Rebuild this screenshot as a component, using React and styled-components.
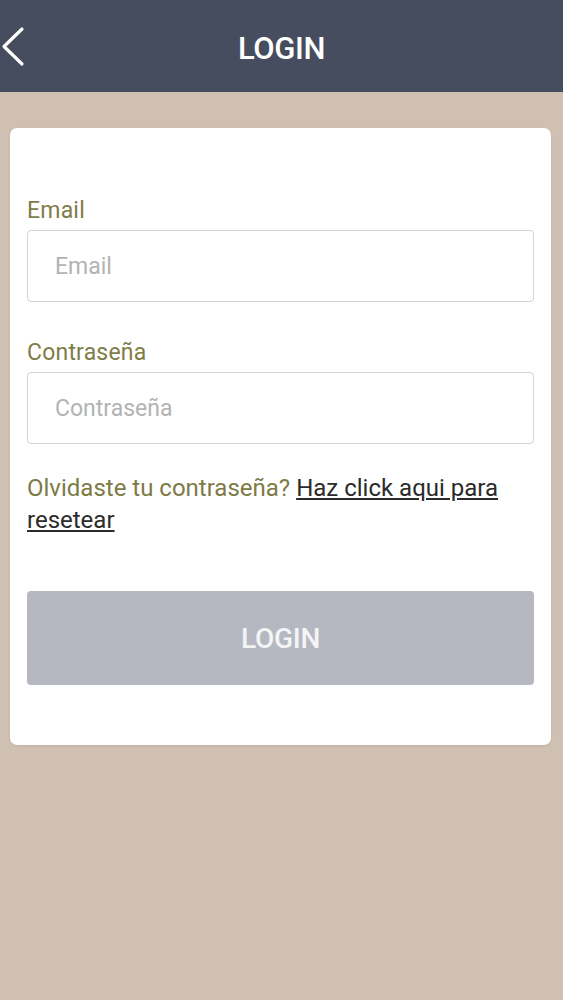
import React from 'react';
import styled, { createGlobalStyle } from 'styled-components';

const GlobalStyle = createGlobalStyle`
	html, body {
		margin: 0;
		padding: 0;
		background: #cfc0b1;
	}
	body {
		font-family: Roboto, 'Liberation Sans', sans-serif;
	}
`;

const Page = styled.div`
	min-height: 1000px;
	background: #cfc0b1;
`;

const HeaderBar = styled.nav`
	height: 92px;
	background: #464d5e;
	display: flex;
	align-items: center;
	justify-content: center;
	position: relative;
`;

const Back = styled.button`
	position: absolute;
	left: 0;
	top: 26px;
	width: 30px;
	height: 42px;
	padding: 0;
	border: none;
	background: none;
	cursor: pointer;

	svg {
		display: block;
	}
`;

const Title = styled.h1`
	margin: 4px 0 0 0;
	font-size: 31px;
	font-weight: 500;
	color: #ffffff;
	letter-spacing: -0.4px;
`;

const Content = styled.div`
	padding: 36px 12px 0 10px;
`;

const Card = styled.form`
	background: #ffffff;
	border-radius: 7px;
	padding: 69px 17px 60px 17px;
	box-shadow: 0 1px 3px rgba(0, 0, 0, 0.08);
`;

const Field = styled.div`
	display: flex;
	flex-direction: column;
	gap: 5px;
	margin-bottom: ${props => props.last ? '28px' : '37px'};
`;

const Label = styled.label`
	font-size: 23px;
	line-height: 28px;
	color: #807c47;
	letter-spacing: 0.2px;
`;

const Input = styled.input`
	box-sizing: border-box;
	height: 72px;
	width: 100%;
	border: 1px solid #d3d3d3;
	border-radius: 4px;
	padding: 0 27px;
	font-family: Roboto, 'Liberation Sans', sans-serif;
	font-size: 23px;
	color: #333;
	outline: none;

	&::placeholder {
		color: #b3b3b3;
	}
`;

const Forgot = styled.p`
	margin: 0 0 55px 0;
	font-size: 24px;
	line-height: 32px;
	color: #7d7a46;
`;

const ResetLink = styled.a`
	color: #2b2b2b;
	text-decoration: underline;
	cursor: pointer;
`;

const SubmitButton = styled.button`
	width: 100%;
	height: 94px;
	border: none;
	border-radius: 4px;
	background: #b5b8c1;
	color: #f4f4f6;
	font-family: Roboto, 'Liberation Sans', sans-serif;
	font-size: 28px;
	font-weight: 500;
	letter-spacing: -0.3px;
	cursor: pointer;
`;

export default function App() {
	return (
		<Page>
			<GlobalStyle />
			<HeaderBar>
				<Back aria-label="back">
					<svg width="30" height="42" viewBox="0 0 30 42">
						<polyline points="22,3 4,20.5 22,38" fill="none" stroke="#ffffff" strokeWidth="3.2" strokeLinecap="round" strokeLinejoin="round" />
					</svg>
				</Back>
				<Title>LOGIN</Title>
			</HeaderBar>
			<Content>
				<Card onSubmit={e => e.preventDefault()}>
					<Field>
						<Label htmlFor="email">Email</Label>
						<Input id="email" type="email" placeholder="Email" />
					</Field>
					<Field last>
						<Label htmlFor="password">Contraseña</Label>
						<Input id="password" type="password" placeholder="Contraseña" />
					</Field>
					<Forgot>
						Olvidaste tu contraseña? <ResetLink>Haz click aqui para resetear</ResetLink>
					</Forgot>
					<SubmitButton type="submit">LOGIN</SubmitButton>
				</Card>
			</Content>
		</Page>
	);
}
